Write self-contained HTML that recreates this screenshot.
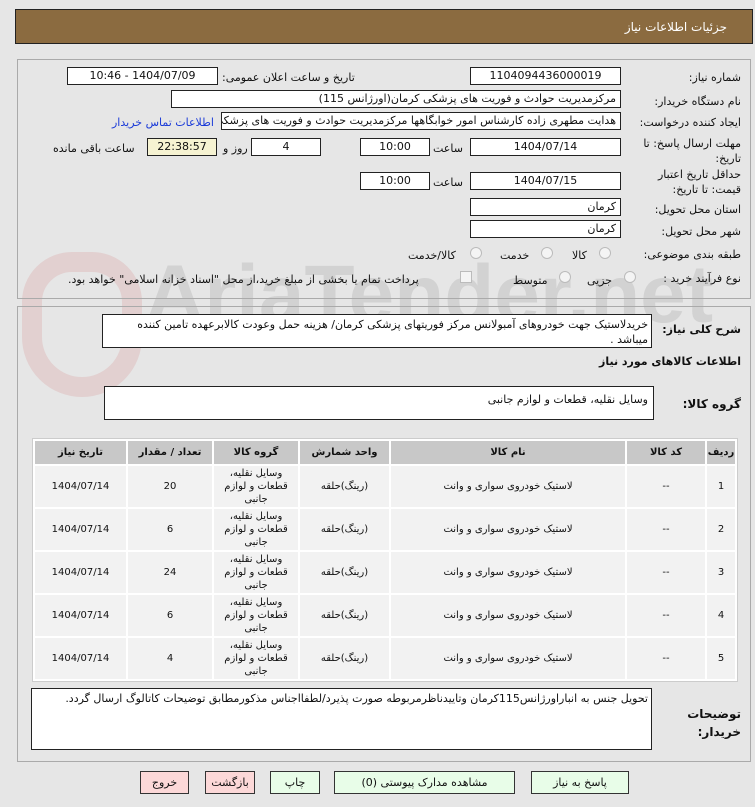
<!DOCTYPE html>
<html><head><meta charset="utf-8">
<style>
*{box-sizing:border-box;margin:0;padding:0}
body{width:755px;height:807px;background:#e6e6e6;font-family:"DejaVu Sans","Liberation Sans",sans-serif;font-size:11px;color:#111;position:relative;overflow:hidden;direction:rtl}
.a{position:absolute}
.box{position:absolute;background:#fff;border:1px solid #222;height:18px;line-height:16px;text-align:center;font-size:11px;white-space:nowrap;overflow:hidden}
.lbl{position:absolute;white-space:nowrap;font-size:11px}
.panel{position:absolute;border:1px solid #aaa}
table{position:absolute;border-collapse:separate;border-spacing:2px;background:#fff;border:1px solid #ccc;direction:rtl}
td,th{text-align:center;font-size:10px}
th{background:#c8c8c8;font-weight:bold;height:23px}
td{background:#f2f2f2;height:41px;line-height:13px}
.btn{position:absolute;height:23px;border:1px solid #333;text-align:center;line-height:21px;font-size:11px;background:#e8fde8}
.rd{position:absolute;width:12px;height:12px;border-radius:50%;border:1px solid #bbb;background:#f4f4f4}
.ta{position:absolute;background:#fff;border:1px solid #222;text-align:right;padding:2px 3px;font-size:11px;line-height:15px}
</style></head><body>
<div class="a" style="left:145px;top:248px;font-size:82px;font-weight:bold;color:rgba(150,150,150,.25);direction:ltr;font-family:'Liberation Sans',sans-serif;white-space:nowrap">AriaTender.net</div>
<div class="a" style="left:22px;top:252px;width:120px;height:145px;border:20px solid rgba(210,120,120,.2);border-radius:50px 50px 60px 60px"></div>

<div class="a" style="left:15px;top:9px;width:738px;height:35px;background:#8b6b40;border:1px solid #222"></div>
<div class="lbl" style="right:28px;top:20px;color:#fff;font-size:12px">جزئیات اطلاعات نیاز</div>

<div class="panel" style="left:17px;top:59px;width:734px;height:240px"></div>
<div class="panel" style="left:17px;top:306px;width:734px;height:456px"></div>

<div class="lbl" style="right:14px;top:71px">شماره نیاز:</div>
<div class="box" style="left:470px;top:67px;width:151px">1104094436000019</div>
<div class="lbl" style="left:222px;top:71px">تاریخ و ساعت اعلان عمومی:</div>
<div class="box" style="left:67px;top:67px;width:151px">1404/07/09 - 10:46</div>

<div class="lbl" style="right:14px;top:95px">نام دستگاه خریدار:</div>
<div class="box" style="left:171px;top:90px;width:450px;text-align:right;padding-right:4px">مرکزمدیریت  حوادث و فوریت های پزشکی کرمان(اورژانس 115)</div>

<div class="lbl" style="right:14px;top:116px">ایجاد کننده درخواست:</div>
<div class="box" style="left:221px;top:112px;width:400px;text-align:right;padding-right:4px">هدایت مطهری زاده کارشناس امور خوابگاهها مرکزمدیریت  حوادث و فوریت های پزشکی</div>
<div class="lbl" style="left:112px;top:116px;color:#1a3ad8">اطلاعات تماس خریدار</div>

<div class="lbl" style="right:14px;top:136px;line-height:15px">مهلت ارسال پاسخ: تا<br>تاریخ:</div>
<div class="box" style="left:470px;top:138px;width:151px">1404/07/14</div>
<div class="lbl" style="left:433px;top:142px">ساعت</div>
<div class="box" style="left:360px;top:138px;width:70px">10:00</div>
<div class="box" style="left:251px;top:138px;width:70px">4</div>
<div class="lbl" style="left:223px;top:142px">روز و</div>
<div class="box" style="left:147px;top:138px;width:70px;background:#f6f3d2">22:38:57</div>
<div class="lbl" style="left:53px;top:142px">ساعت باقی مانده</div>

<div class="lbl" style="right:14px;top:167px;line-height:15px">حداقل تاریخ اعتبار<br>قیمت: تا تاریخ:</div>
<div class="box" style="left:470px;top:172px;width:151px">1404/07/15</div>
<div class="lbl" style="left:433px;top:176px">ساعت</div>
<div class="box" style="left:360px;top:172px;width:70px">10:00</div>

<div class="lbl" style="right:14px;top:203px">استان محل تحویل:</div>
<div class="box" style="left:470px;top:198px;width:151px;text-align:right;padding-right:4px">کرمان</div>
<div class="lbl" style="right:14px;top:225px">شهر محل تحویل:</div>
<div class="box" style="left:470px;top:220px;width:151px;text-align:right;padding-right:4px">کرمان</div>

<div class="lbl" style="right:14px;top:248px">طبقه بندی موضوعی:</div>
<div class="rd" style="left:599px;top:247px"></div><div class="lbl" style="left:572px;top:249px">کالا</div>
<div class="rd" style="left:541px;top:247px"></div><div class="lbl" style="left:500px;top:249px">خدمت</div>
<div class="rd" style="left:470px;top:247px"></div><div class="lbl" style="left:408px;top:249px">کالا/خدمت</div>

<div class="lbl" style="right:14px;top:272px">نوع فرآیند خرید :</div>
<div class="rd" style="left:624px;top:271px"></div><div class="lbl" style="left:587px;top:274px">جزیی</div>
<div class="rd" style="left:559px;top:271px"></div><div class="lbl" style="left:513px;top:274px">متوسط</div>
<div class="a" style="left:460px;top:271px;width:12px;height:12px;border:1px solid #bbb;background:#f4f4f4"></div>
<div class="lbl" style="left:68px;top:273px">پرداخت تمام یا بخشی از مبلغ خرید،از محل "اسناد خزانه اسلامی" خواهد بود.</div>

<div class="lbl" style="right:14px;top:323px;font-weight:bold">شرح کلی نیاز:</div>
<div class="ta" style="left:102px;top:314px;width:550px;height:34px">خریدلاستیک جهت خودروهای آمبولانس مرکز فوریتهای پزشکی کرمان/ هزینه حمل وعودت کالابرعهده تامین کننده میباشد .</div>
<div class="lbl" style="right:14px;top:355px;font-weight:bold">اطلاعات کالاهای مورد نیاز</div>

<div class="lbl" style="right:14px;top:397px;font-weight:bold;font-size:12px">گروه کالا:</div>
<div class="ta" style="left:104px;top:386px;width:550px;height:34px;padding-right:5px;padding-top:5px">وسایل نقلیه، قطعات و لوازم جانبی</div>

<table style="left:32px;top:438px;width:706px">
<tr><th style="width:28px">ردیف</th><th style="width:78px">کد کالا</th><th style="width:234px">نام کالا</th><th style="width:89px">واحد شمارش</th><th style="width:84px">گروه کالا</th><th style="width:84px">تعداد / مقدار</th><th>تاریخ نیاز</th></tr>
<tr><td>1</td><td>--</td><td>لاستیک خودروی سواری و وانت</td><td>(رینگ)حلقه</td><td>وسایل نقلیه،<br>قطعات و لوازم<br>جانبی</td><td>20</td><td>1404/07/14</td></tr>
<tr><td>2</td><td>--</td><td>لاستیک خودروی سواری و وانت</td><td>(رینگ)حلقه</td><td>وسایل نقلیه،<br>قطعات و لوازم<br>جانبی</td><td>6</td><td>1404/07/14</td></tr>
<tr><td>3</td><td>--</td><td>لاستیک خودروی سواری و وانت</td><td>(رینگ)حلقه</td><td>وسایل نقلیه،<br>قطعات و لوازم<br>جانبی</td><td>24</td><td>1404/07/14</td></tr>
<tr><td>4</td><td>--</td><td>لاستیک خودروی سواری و وانت</td><td>(رینگ)حلقه</td><td>وسایل نقلیه،<br>قطعات و لوازم<br>جانبی</td><td>6</td><td>1404/07/14</td></tr>
<tr><td>5</td><td>--</td><td>لاستیک خودروی سواری و وانت</td><td>(رینگ)حلقه</td><td>وسایل نقلیه،<br>قطعات و لوازم<br>جانبی</td><td>4</td><td>1404/07/14</td></tr>
</table>

<div class="ta" style="left:31px;top:688px;width:621px;height:62px">تحویل جنس به انباراورژانس115کرمان وتاییدناظرمربوطه صورت پذیرد/لطفااجناس مذکورمطابق توضیحات کاتالوگ ارسال گردد.</div>
<div class="lbl" style="right:14px;top:705px;font-weight:bold;font-size:12px;line-height:18px">توضیحات<br>خریدار:</div>

<div class="btn" style="left:531px;top:771px;width:98px">پاسخ به نیاز</div>
<div class="btn" style="left:334px;top:771px;width:181px">مشاهده مدارک پیوستی (0)</div>
<div class="btn" style="left:270px;top:771px;width:50px">چاپ</div>
<div class="btn" style="left:205px;top:771px;width:50px;background:#fcd8d8">بازگشت</div>
<div class="btn" style="left:140px;top:771px;width:49px;background:#fcd8d8">خروج</div>
</body></html>
